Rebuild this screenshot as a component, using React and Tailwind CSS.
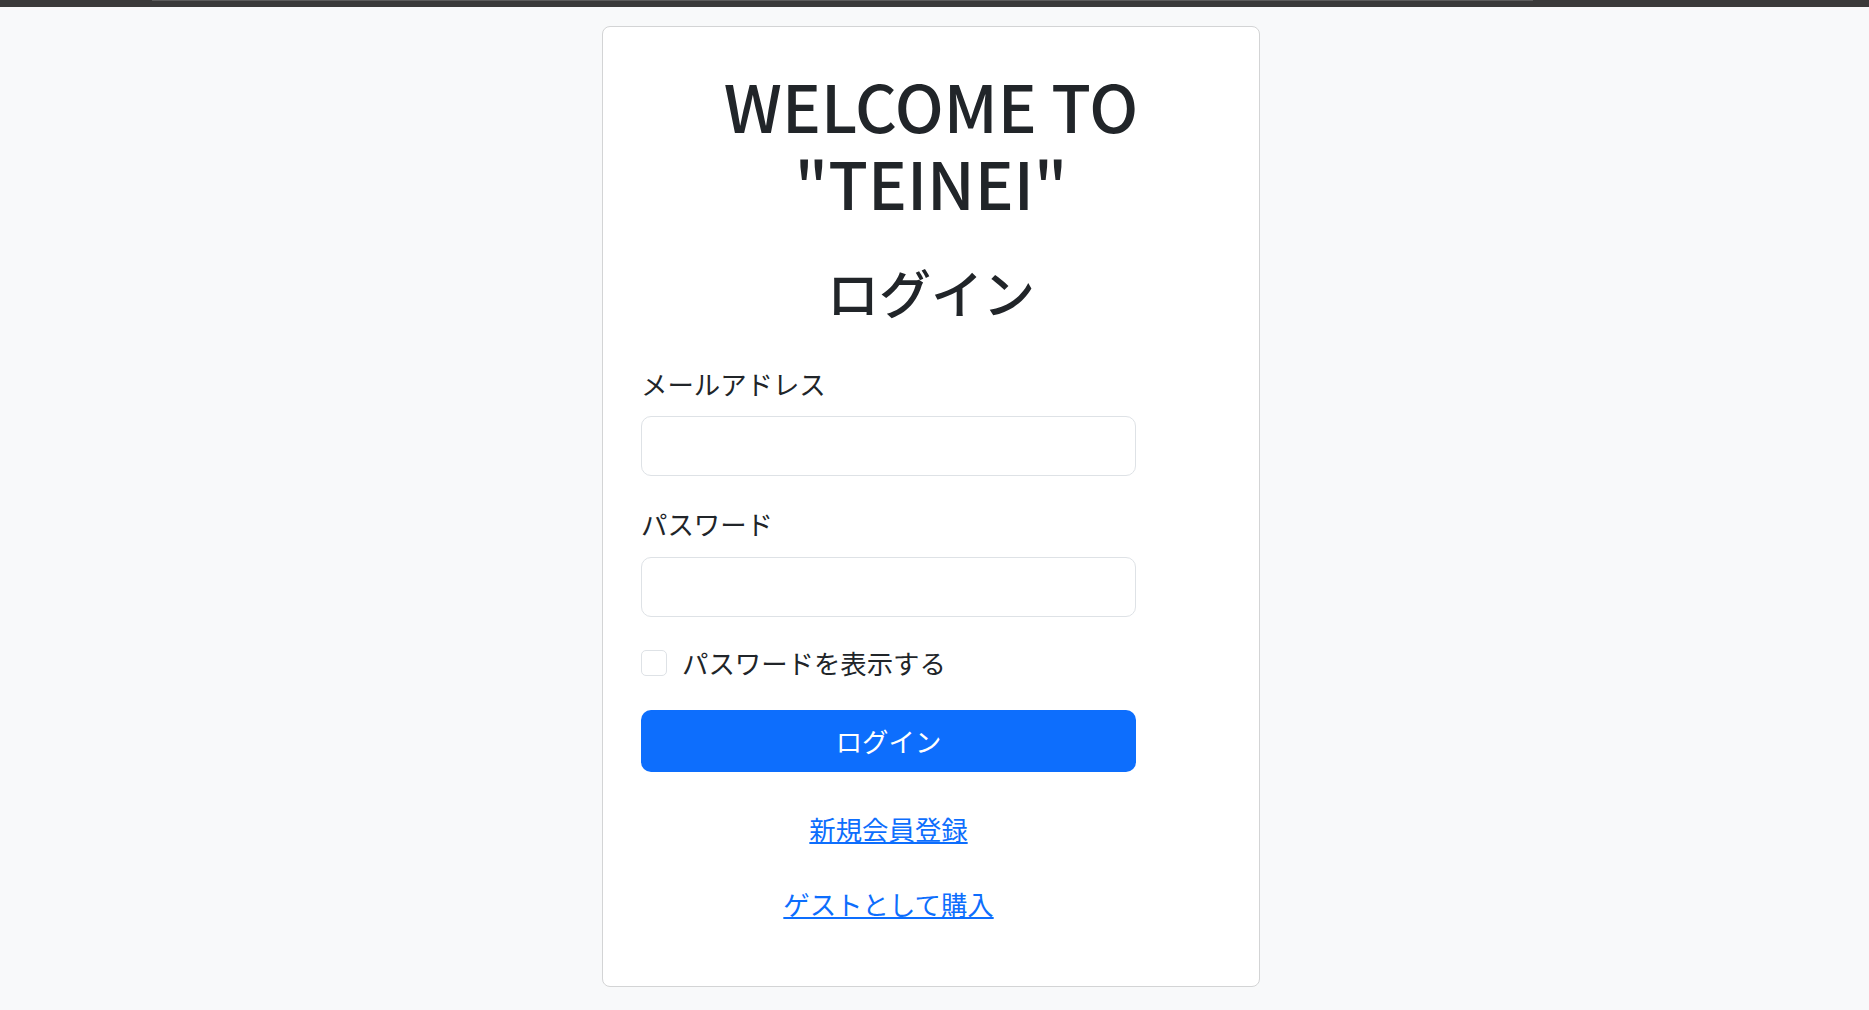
import React, { useState } from 'react';

export default function App() {
  const [email, setEmail] = useState('');
  const [password, setPassword] = useState('');
  const [showPassword, setShowPassword] = useState(false);

  return (
    <div className="min-h-screen bg-[#f8f9fa] text-[#212529] font-['Noto_Sans_CJK_JP','Noto_Sans',sans-serif]">
      <div className="h-[7px] bg-[#3a3a3a]">
        <div className="ml-[152px] h-[1px] w-[1381px] bg-[#5c5c5c]" />
      </div>

      <div className="pt-[19px] pb-[22px]">
        <div className="ml-[602px] w-[658px] rounded-[8px] border border-[#d3d4d5] bg-white pt-[40px] pb-[63px]">
          <h1 className="text-center text-[65px] leading-[76.8px] font-medium">
            WELCOME TO
            <br />
            "TEINEI"
          </h1>
          <h2 className="mt-[40px] text-center text-[52px] leading-[62px] font-medium">ログイン</h2>

          <form className="ml-[38px] mt-[41px] w-[495px]" onSubmit={e => e.preventDefault()}>
            <label className="block text-[26.4px] leading-[39px]">メールアドレス</label>
            <input
              type="email"
              value={email}
              onChange={e => setEmail(e.target.value)}
              className="mt-[13px] block h-[60px] w-full rounded-[10px] border border-[#dee2e6] bg-white px-[20px] text-[25px] outline-none"
            />

            <label className="mt-[28px] block text-[26.4px] leading-[39px]">パスワード</label>
            <input
              type={showPassword ? 'text' : 'password'}
              value={password}
              onChange={e => setPassword(e.target.value)}
              className="mt-[14px] block h-[60px] w-full rounded-[10px] border border-[#dee2e6] bg-white px-[20px] text-[25px] outline-none"
            />

            <label className="mt-[27px] flex h-[39px] items-center gap-[15px] text-[26.4px]">
              <input
                type="checkbox"
                checked={showPassword}
                onChange={e => setShowPassword(e.target.checked)}
                className="h-[26px] w-[26px] appearance-none rounded-[5px] border border-[#dee2e6] bg-white checked:bg-[#0d6efd]"
              />
              パスワードを表示する
            </label>

            <button
              type="submit"
              className="mt-[27px] block h-[62px] w-full rounded-[10px] bg-[#0d6efd] text-[26.4px] text-white"
            >
              ログイン
            </button>

            <div className="mt-[37px] text-center text-[26.4px] leading-[39px]">
              <a href="#" className="text-[#0d6efd] underline">新規会員登録</a>
            </div>
            <div className="mt-[36px] text-center text-[26.4px] leading-[39px]">
              <a href="#" className="text-[#0d6efd] underline">ゲストとして購入</a>
            </div>
          </form>
        </div>
      </div>
    </div>
  );
}
